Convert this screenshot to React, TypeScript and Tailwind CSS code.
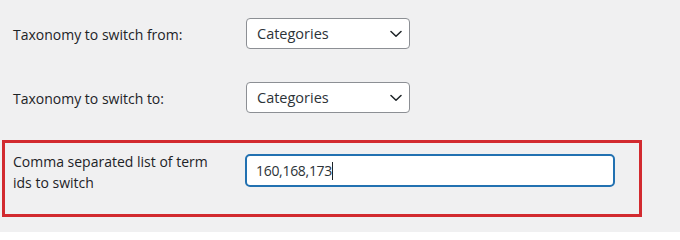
import React from "react";

function Chevron() {
  return (
    <svg width="12" height="8" viewBox="0 0 12 8" className="absolute right-[7px] top-1/2 -translate-y-1/2">
      <path d="M1 1.5 L6 6.3 L11 1.5" fill="none" stroke="#1d2327" strokeWidth="1.5" strokeLinecap="round" strokeLinejoin="round" />
    </svg>
  );
}

function Select() {
  return (
    <div className="relative w-[164px] h-[31px] bg-white border border-[#8c8f94] rounded-[4px] flex items-center pl-[10px] text-[14.5px] text-[#2c3338]">
      Categories
      <Chevron />
    </div>
  );
}

export default function App() {
  return (
    <div
      className="w-[680px] h-[232px] bg-[#f0f0f1] pl-[2px] pt-[18px] overflow-hidden"
      style={{ fontFamily: '"Open Sans", "Noto Sans", Arial, sans-serif' }}
    >
      <div className="flex items-center h-[31px]">
        <div className="w-[244px] pl-[11px] pt-[2px] text-[14px] font-medium text-[#1d2327]">Taxonomy to switch from:</div>
        <Select />
      </div>
      <div className="flex items-center h-[31px] mt-[33px]">
        <div className="w-[244px] pl-[11px] pt-[2px] text-[14px] font-medium text-[#1d2327]">Taxonomy to switch to:</div>
        <Select />
      </div>
      <div className="mt-[27px] w-[640px] h-[77px] border-[3px] border-[#d22a2f] flex items-start">
        <div className="w-[240px] pl-[8px] pt-[8px] text-[14px] font-medium leading-[21px] text-[#1d2327]">
          Comma separated list of term
          <br />
          ids to switch
        </div>
        <div className="mt-[11px] w-[370px] h-[33px] bg-white border-2 border-[#2271b1] rounded-[5px] flex items-center pl-[9px] text-[14px] tracking-[-0.3px] text-[#2c3338]">
          160,168,173
          <span className="inline-block w-px h-[18px] bg-[#1d2327]" />
        </div>
      </div>
    </div>
  );
}
